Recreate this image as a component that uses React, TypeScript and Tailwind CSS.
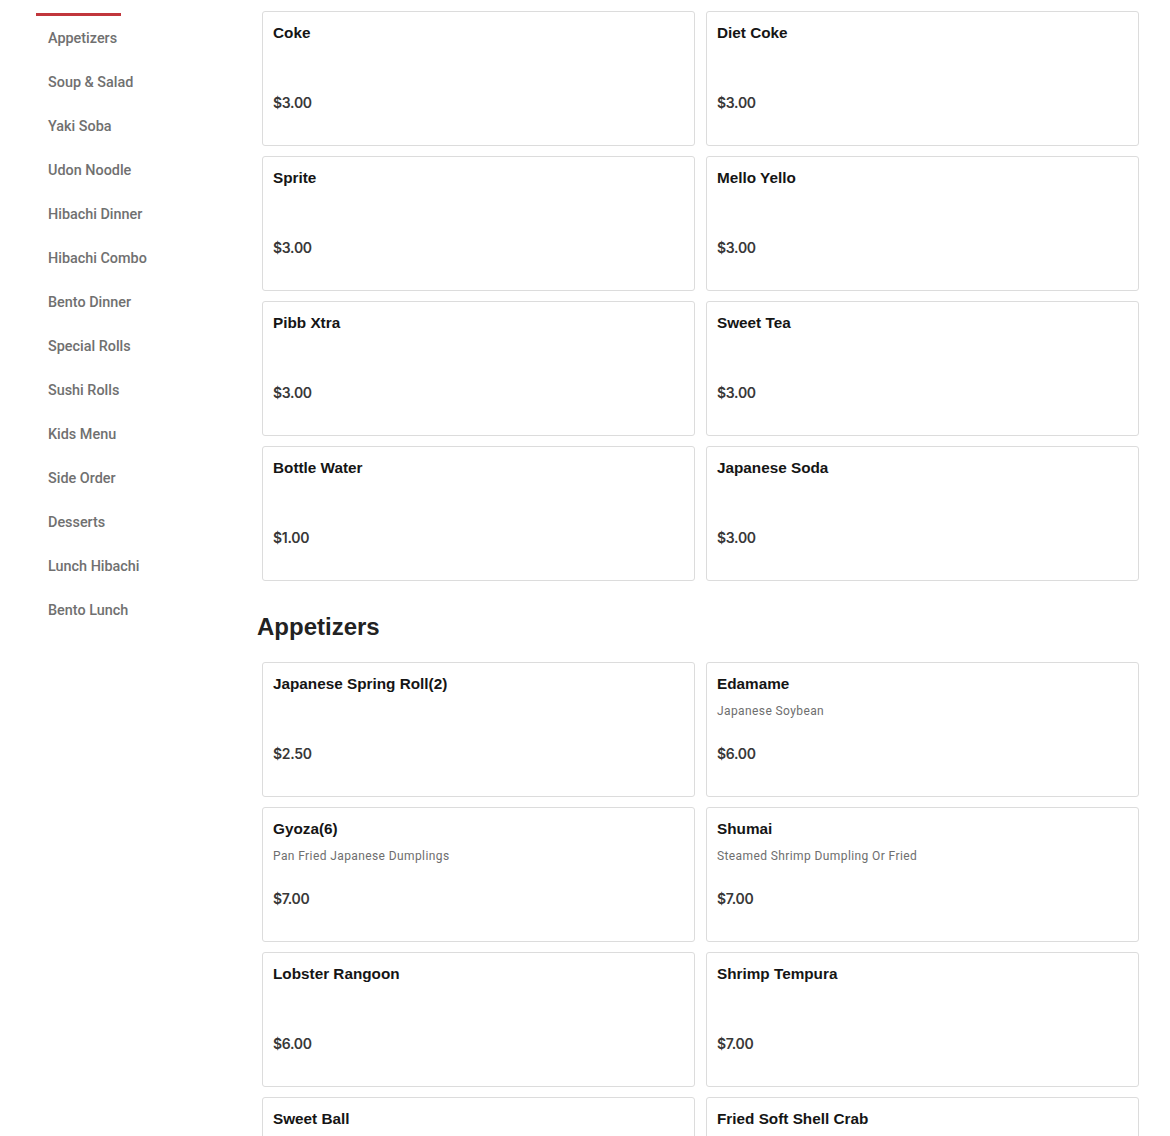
import React from "react";

const cats = [
  "Appetizers",
  "Soup & Salad",
  "Yaki Soba",
  "Udon Noodle",
  "Hibachi Dinner",
  "Hibachi Combo",
  "Bento Dinner",
  "Special Rolls",
  "Sushi Rolls",
  "Kids Menu",
  "Side Order",
  "Desserts",
  "Lunch Hibachi",
  "Bento Lunch",
];

type Item = { name: string; price: string; desc?: string };

const drinks: Item[] = [
  { name: "Coke", price: "$3.00" },
  { name: "Diet Coke", price: "$3.00" },
  { name: "Sprite", price: "$3.00" },
  { name: "Mello Yello", price: "$3.00" },
  { name: "Pibb Xtra", price: "$3.00" },
  { name: "Sweet Tea", price: "$3.00" },
  { name: "Bottle Water", price: "$1.00" },
  { name: "Japanese Soda", price: "$3.00" },
];

const apps: Item[] = [
  { name: "Japanese Spring Roll(2)", price: "$2.50" },
  { name: "Edamame", price: "$6.00", desc: "Japanese Soybean" },
  { name: "Gyoza(6)", price: "$7.00", desc: "Pan Fried Japanese Dumplings" },
  { name: "Shumai", price: "$7.00", desc: "Steamed Shrimp Dumpling Or Fried" },
  { name: "Lobster Rangoon", price: "$6.00" },
  { name: "Shrimp Tempura", price: "$7.00" },
  { name: "Sweet Ball", price: "$5.00" },
  { name: "Fried Soft Shell Crab", price: "$8.00" },
];

function Card({ item }: { item: Item }) {
  return (
    <div className="h-[135px] box-border border border-[#dcdcdc] rounded-[3px] bg-white px-[10px] pt-[11px]">
      <div className="font-['Liberation_Sans',Arial,sans-serif] font-bold text-[15.3px] leading-[20px] text-[#151515]">
        {item.name}
      </div>
      {item.desc ? (
        <div className="mt-[10px] h-[14px] font-['Roboto',sans-serif] text-[12px] leading-[14px] text-[#6e6e6e] tracking-[0.4px]">
          {item.desc}
        </div>
      ) : (
        <div className="mt-[10px] h-[14px]" />
      )}
      <div className="mt-[26px] font-['Inter',sans-serif] font-semibold text-[14px] leading-[20px] text-[#383838] tracking-[-0.3px]">
        {item.price}
      </div>
    </div>
  );
}

export default function App() {
  return (
    <div className="w-[1170px] h-[1136px] overflow-hidden bg-white flex">
      <aside className="w-[257px] shrink-0 pl-[36px] pt-[13px]">
        <div className="w-[85px] h-[3px] bg-[#c1363c]" />
        <ul className="pt-[13px]">
          {cats.map((c) => (
            <li
              key={c}
              className="pl-[12px] h-[44px] font-['Roboto',sans-serif] font-medium text-[14.4px] leading-[20px] text-[#707070]"
            >
              {c}
            </li>
          ))}
        </ul>
      </aside>
      <main className="flex-1">
        <div className="ml-[5px] pt-[11px] grid grid-cols-[433px_433px] gap-x-[11px] gap-y-[10px]">
          {drinks.map((d) => (
            <Card key={d.name} item={d} />
          ))}
        </div>
        <h2 className="mt-[31px] mb-[20px] font-['Liberation_Sans',Arial,sans-serif] font-bold text-[24px] leading-[30px] text-[#222]">
          Appetizers
        </h2>
        <div className="ml-[5px] grid grid-cols-[433px_433px] gap-x-[11px] gap-y-[10px]">
          {apps.map((d) => (
            <Card key={d.name} item={d} />
          ))}
        </div>
      </main>
    </div>
  );
}
